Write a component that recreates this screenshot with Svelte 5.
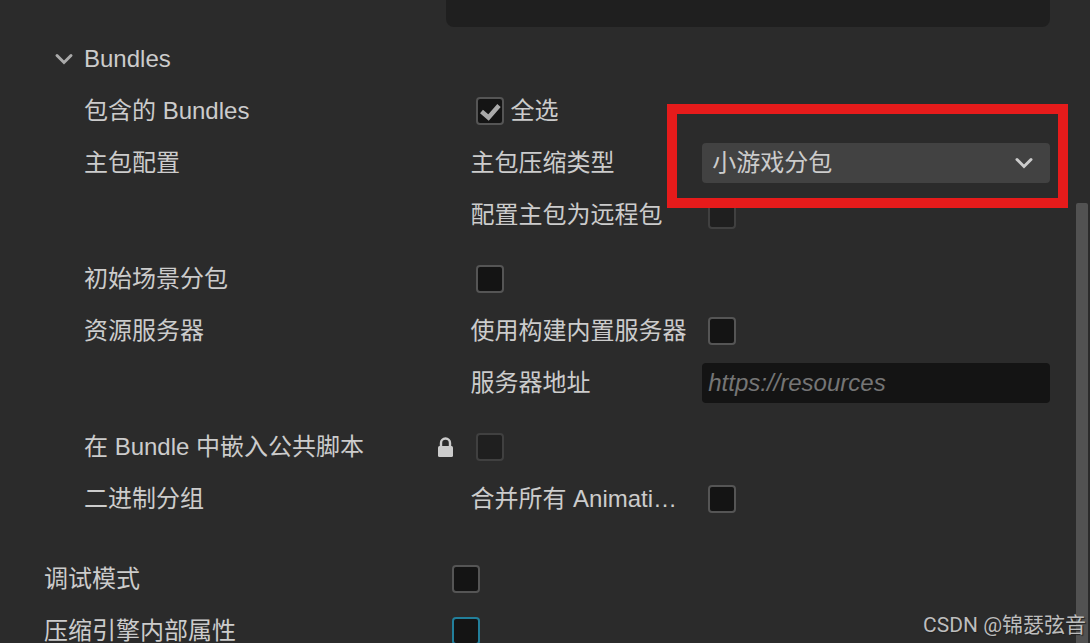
<script lang="ts">
    let expanded = true;
    let selectAll = true;
    let compression = "subpackage";
    let remoteBundle = false;
    let startScene = false;
    let builtinServer = false;
    let serverAddress = "";
    let embedScripts = false;
    let mergeAnimation = false;
    let debugMode = false;
    let mangleProps = false;
</script>

<main class="panel">
    <div class="row">
        <span></span>
        <div class="output-box"></div>
    </div>

    <section class="section">
        <button
            class="section-header"
            aria-expanded={expanded}
            on:click={() => (expanded = !expanded)}
        >
            <svg class="arrow" class:closed={!expanded} viewBox="0 0 20 20">
                <path d="M3 6.500l7 7 7-7" />
            </svg>
            Bundles
        </button>

        {#if expanded}
            <div class="section-body">
                <div class="row">
                    <span class="label">包含的 Bundles</span>
                    <div class="content">
                        <input id="select-all" type="checkbox" bind:checked={selectAll} />
                        <label class="label" for="select-all">全选</label>
                    </div>
                </div>

                <div class="row group">
                    <span class="label">主包配置</span>
                    <div class="stack">
                        <div class="row">
                            <label class="label" for="compression">主包压缩类型</label>
                            <div class="select-wrap">
                                <select id="compression" bind:value={compression}>
                                    <option value="subpackage">小游戏分包</option>
                                </select>
                                <svg class="arrow" viewBox="0 0 20 20">
                                    <path d="M3 6.500l7 7 7-7" />
                                </svg>
                                <div class="highlight"></div>
                            </div>
                        </div>
                        <div class="row">
                            <label class="label" for="remote">配置主包为远程包</label>
                            <div class="content">
                                <input id="remote" type="checkbox" disabled bind:checked={remoteBundle} />
                            </div>
                        </div>
                    </div>
                </div>

                <div class="row">
                    <label class="label" for="start-scene">初始场景分包</label>
                    <div class="content">
                        <input id="start-scene" type="checkbox" bind:checked={startScene} />
                    </div>
                </div>

                <div class="row group">
                    <span class="label">资源服务器</span>
                    <div class="stack">
                        <div class="row">
                            <label class="label" for="builtin">使用构建内置服务器</label>
                            <div class="content">
                                <input id="builtin" type="checkbox" bind:checked={builtinServer} />
                            </div>
                        </div>
                        <div class="row">
                            <label class="label" for="address">服务器地址</label>
                            <input
                                id="address"
                                class="text"
                                type="text"
                                placeholder="https://resources"
                                bind:value={serverAddress}
                            />
                        </div>
                    </div>
                </div>

                <div class="row">
                    <div class="locked">
                        <label class="label" for="embed">在 Bundle 中嵌入公共脚本</label>
                        <svg class="lock" viewBox="0 0 16 20">
                            <rect x="0" y="9" width="15" height="11" rx="1.5" />
                            <path d="M3 10V6a4.500 4.500 0 0 1 9 0V10" />
                        </svg>
                    </div>
                    <div class="content">
                        <input id="embed" type="checkbox" disabled bind:checked={embedScripts} />
                    </div>
                </div>

                <div class="row">
                    <span class="label">二进制分组</span>
                    <div class="row">
                        <label class="label" for="merge">合并所有 Animati…</label>
                        <div class="content">
                            <input id="merge" type="checkbox" bind:checked={mergeAnimation} />
                        </div>
                    </div>
                </div>
            </div>
        {/if}
    </section>

    <section class="options">
        <div class="row">
            <label class="label" for="debug">调试模式</label>
            <div class="content">
                <input id="debug" type="checkbox" bind:checked={debugMode} />
            </div>
        </div>
        <div class="row">
            <label class="label" for="mangle">压缩引擎内部属性</label>
            <div class="content">
                <input id="mangle" class="focused" type="checkbox" bind:checked={mangleProps} />
            </div>
        </div>
    </section>

    <div class="scrollbar"></div>
    <div class="watermark">CSDN @锦瑟弦音</div>
</main>

<style>
    :global(body) {
        background: #2b2b2b;
    }
    .panel {
        position: relative;
        box-sizing: border-box;
        height: 100vh;
        overflow: hidden;
        padding: 0 40px 0 44px;
        background: #2b2b2b;
        color: #ccc;
        font-family: "Liberation Sans", "Noto Sans CJK SC", sans-serif;
        font-size: 24px;
        line-height: 40px;
    }
    .row {
        display: grid;
        grid-template-columns: minmax(0, 2fr) minmax(0, 3fr);
        align-items: center;
    }
    .group {
        align-items: start;
        margin-bottom: 12px;
    }
    .stack,
    .section-body,
    .options {
        display: flex;
        flex-direction: column;
        gap: 12px;
    }
    .output-box {
        height: 27px;
        border-radius: 0 0 8px 8px;
        background: #1f1f1f;
    }
    .section {
        margin-top: 12px;
    }
    .section-header {
        display: flex;
        align-items: center;
        gap: 10px;
        height: 40px;
        margin: 0 0 12px;
        padding: 0 0 0 10px;
        border: none;
        background: none;
        color: inherit;
        font: inherit;
        cursor: pointer;
    }
    .section-body {
        padding-left: 40px;
    }
    .options {
        margin-top: 40px;
    }
    .label {
        height: 40px;
        overflow: hidden;
        white-space: nowrap;
        text-overflow: ellipsis;
    }
    .content {
        display: flex;
        align-items: center;
        gap: 6px;
        height: 40px;
        padding-left: 6px;
    }
    .locked {
        display: flex;
        align-items: center;
        justify-content: space-between;
        padding-right: 16px;
    }
    .arrow {
        width: 20px;
        height: 20px;
        fill: none;
        stroke: #aaa;
        stroke-width: 3;
        stroke-linecap: round;
    }
    .arrow.closed {
        transform: rotate(-90deg);
    }
    .lock {
        width: 16px;
        height: 20px;
        fill: #ccc;
    }
    .lock path {
        fill: none;
        stroke: #ccc;
        stroke-width: 2.4;
    }
    input[type="checkbox"] {
        appearance: none;
        box-sizing: border-box;
        width: 28px;
        height: 28px;
        margin: 0;
        border: 2px solid #555;
        border-radius: 4px;
        background: #141414;
    }
    input[type="checkbox"]:checked {
        background: #141414
            url("data:image/svg+xml,%3Csvg xmlns='http://www.w3.org/2000/svg' viewBox='0 0 24 24'%3E%3Cpath d='M3.500 12.500l7 6L21 6.500' fill='none' stroke='%23aaa' stroke-width='4.500'/%3E%3C/svg%3E")
            center / 24px 24px;
    }
    input[type="checkbox"]:disabled {
        border-color: #404040;
        background: #1f1f1f;
    }
    input[type="checkbox"].focused {
        border-color: #227f9b;
    }
    .select-wrap {
        position: relative;
        height: 40px;
    }
    select {
        appearance: none;
        display: block;
        box-sizing: border-box;
        width: 100%;
        height: 40px;
        padding: 0 40px 0 10px;
        border: none;
        border-radius: 4px;
        background: #424242;
        color: inherit;
        font: inherit;
    }
    .select-wrap .arrow {
        position: absolute;
        top: 10px;
        right: 16px;
        stroke: #ccc;
        pointer-events: none;
    }
    .highlight {
        position: absolute;
        inset: -39px -18px -25px -35px;
        z-index: 1;
        border: 10px solid #e61b1b;
        pointer-events: none;
    }
    .text {
        box-sizing: border-box;
        width: 100%;
        height: 40px;
        padding: 0 6px;
        border: none;
        border-radius: 4px;
        outline: none;
        background: #141414;
        color: inherit;
        font: inherit;
    }
    .text::placeholder {
        color: #757575;
        font-style: italic;
        opacity: 1;
    }
    .scrollbar {
        position: absolute;
        top: 203px;
        right: 2px;
        bottom: 0;
        width: 12px;
        border-radius: 2px 2px 0 0;
        background: #525252;
    }
    .watermark {
        position: absolute;
        right: 4px;
        bottom: 2px;
        color: #bdbdbd;
        font-family: Roboto, "Noto Sans CJK SC", sans-serif;
        font-size: 21px;
        line-height: 32px;
        text-shadow: 1px 1px 1px #222;
    }
</style>
